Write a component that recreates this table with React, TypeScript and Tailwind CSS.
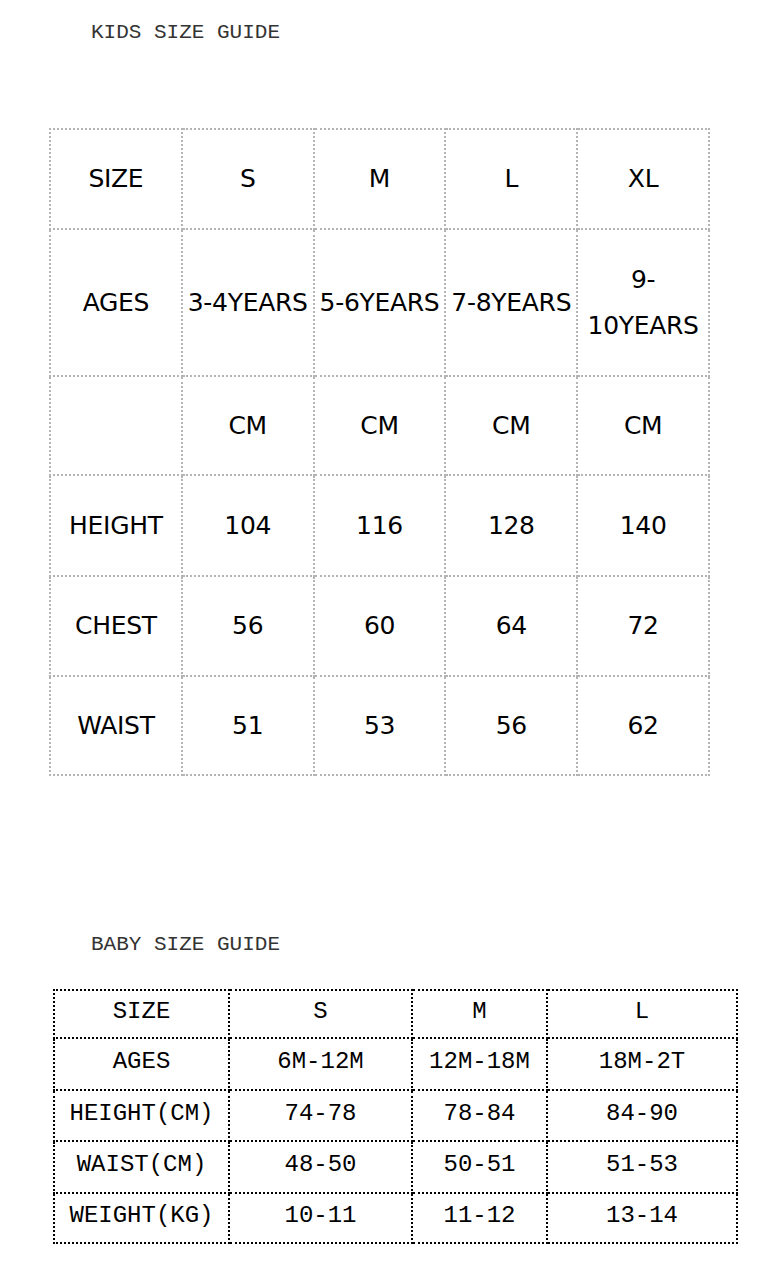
import React from 'react';

export default function App() {
  const kids = [
    ['SIZE', 'S', 'M', 'L', 'XL'],
    ['AGES', '3-4YEARS', '5-6YEARS', '7-8YEARS', '9-10YEARS'],
    ['', 'CM', 'CM', 'CM', 'CM'],
    ['HEIGHT', '104', '116', '128', '140'],
    ['CHEST', '56', '60', '64', '72'],
    ['WAIST', '51', '53', '56', '62'],
  ];
  const kidsRowH = ['h-[100px]', 'h-[147px]', 'h-[99px]', 'h-[101px]', 'h-[100px]', 'h-[99px]'];

  const baby = [
    ['SIZE', 'S', 'M', 'L'],
    ['AGES', '6M-12M', '12M-18M', '18M-2T'],
    ['HEIGHT(CM)', '74-78', '78-84', '84-90'],
    ['WAIST(CM)', '48-50', '50-51', '51-53'],
    ['WEIGHT(KG)', '10-11', '11-12', '13-14'],
  ];
  const babyColW = ['w-[175px]', 'w-[183px]', 'w-[135px]', 'w-[190px]'];
  const babyRowH = ['h-[48px]', 'h-[52px]', 'h-[51px]', 'h-[52px]', 'h-[50px]'];

  return (
    <div className="w-[758px] h-[1280px] bg-white">
      {/* Kids */}
      <div className="pt-[20px] pl-[91px] h-[128px]">
        <p className="font-['Liberation_Mono',monospace] text-[21px] leading-[26px] text-[#333]">KIDS SIZE GUIDE</p>
      </div>
      <table className="ml-[49px] w-[661px] table-fixed border-collapse border-2 border-dotted border-[#a0a0a0] font-['DejaVu_Sans',sans-serif] text-[25px] text-black">
        <tbody>
          {kids.map((row, i) => (
            <tr key={i} className={kidsRowH[i]}>
              {row.map((cell, j) => (
                <td
                  key={j}
                  className="border-2 border-dotted border-[#b4b4b4] text-center align-middle leading-[46px] tracking-[-0.3px] px-0"
                >
                  {cell === '9-10YEARS' ? (
                    <>
                      9-
                      <br />
                      10YEARS
                    </>
                  ) : (
                    cell
                  )}
                </td>
              ))}
            </tr>
          ))}
        </tbody>
      </table>

      {/* Baby */}
      <div className="mt-[156px] pl-[91px] h-[57px]">
        <p className="font-['Liberation_Mono',monospace] text-[21px] leading-[26px] text-[#333]">BABY SIZE GUIDE</p>
      </div>
      <table className="ml-[53px] w-[683px] table-fixed border-collapse border-2 border-dotted border-black font-['Liberation_Mono',monospace] text-[24px] text-black">
        <colgroup>
          {babyColW.map((w, i) => (
            <col key={i} className={w} />
          ))}
        </colgroup>
        <tbody>
          {baby.map((row, i) => (
            <tr key={i} className={babyRowH[i]}>
              {row.map((cell, j) => (
                <td key={j} className="border-2 border-dotted border-black text-center align-middle leading-[26px] pb-[4px]">
                  {cell}
                </td>
              ))}
            </tr>
          ))}
        </tbody>
      </table>
    </div>
  );
}
